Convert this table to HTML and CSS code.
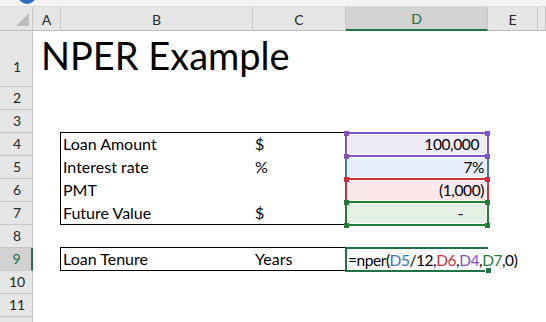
FILE: index.html
```html
<!DOCTYPE html>
<html>
<head>
<meta charset="utf-8">
<link rel="stylesheet" href="styles.css">
</head>
<body>
<div class="top"><span class="orb"></span></div>
<div class="sheet">
  <div class="corner"><span class="tri"></span></div>
  <div class="ch">A</div>
  <div class="ch">B</div>
  <div class="ch">C</div>
  <div class="ch sel">D</div>
  <div class="ch">E</div>
  <div class="ch"></div>

  <div class="rh rh-title">1</div>
  <div class="title">NPER Example</div>

  <div class="rh">2</div>
  <div class="fill"></div>

  <div class="rh">3</div>
  <div class="fill"></div>

  <div class="rh">4</div>
  <div class="cell"></div>
  <div class="cell bx bx-l bx-t">Loan Amount</div>
  <div class="cell bx bx-r bx-t">$</div>
  <div class="cell num hl hl-purple pad-acct">100,000</div>
  <div class="cell"></div>
  <div class="cell"></div>

  <div class="rh">5</div>
  <div class="cell"></div>
  <div class="cell bx bx-l">Interest rate</div>
  <div class="cell bx bx-r">%</div>
  <div class="cell num hl hl-blue pad-pct">7%</div>
  <div class="cell"></div>
  <div class="cell"></div>

  <div class="rh">6</div>
  <div class="cell"></div>
  <div class="cell bx bx-l">PMT</div>
  <div class="cell bx bx-r"></div>
  <div class="cell num hl hl-red pad-pct">(1,000)</div>
  <div class="cell"></div>
  <div class="cell"></div>

  <div class="rh">7</div>
  <div class="cell"></div>
  <div class="cell bx bx-l bx-b">Future Value</div>
  <div class="cell bx bx-r bx-b">$</div>
  <div class="cell num hl hl-green pad-dash">-</div>
  <div class="cell"></div>
  <div class="cell"></div>

  <div class="rh">8</div>
  <div class="fill"></div>

  <div class="rh sel">9</div>
  <div class="cell"></div>
  <div class="cell bx bx-l bx-t bx-b">Loan Tenure</div>
  <div class="cell bx bx-r bx-t bx-b">Years</div>
  <div class="cell active"><span class="formula">=nper(<span class="ref-blue">D5</span>/12,<span class="ref-red">D6</span>,<span class="ref-purple">D4</span>,<span class="ref-green">D7</span>,0)</span><span class="caret"></span></div>
  <div class="cell"></div>
  <div class="cell"></div>

  <div class="rh">10</div>
  <div class="fill"></div>

  <div class="rh">11</div>
  <div class="fill"></div>

  <div class="rh"></div>
  <div class="fill"></div>
</div>
</body>
</html>
```

FILE: styles.css
```css
html, body {
  margin: 0;
  padding: 0;
  background: #ffffff;
  overflow: hidden;
  width: 546px;
  height: 322px;
}

body {
  font-family: Lato, "Liberation Sans", sans-serif;
  color: #000;
}

.top {
  height: 6px;
  background: #f3f3f3;
  border-bottom: 1px solid #dcdcdc;
  display: flex;
  padding-left: 18px;
  overflow: hidden;
}

.orb {
  display: block;
  width: 18px;
  height: 18px;
  border-radius: 50%;
  background: #2f6fc2;
  margin-top: -14px;
}

.sheet {
  display: grid;
  grid-template-columns: 33px 28px 192px 93px 142px 50px 8px;
  grid-template-rows: 24px 56px repeat(11, 23px);
}

.corner {
  background: #e6e6e6;
  border-right: 1px solid #c4c4c4;
  border-bottom: 1px solid #bcbcbc;
  display: flex;
  justify-content: flex-end;
  align-items: flex-end;
  padding: 0 3px 4px 0;
}

.tri {
  width: 0;
  height: 0;
  border-left: 13px solid transparent;
  border-bottom: 13px solid #bdbdbd;
}

.ch {
  background: #e6e6e6;
  border-right: 1px solid #c6c6c6;
  border-bottom: 1px solid #bcbcbc;
  font-size: 14px;
  color: #262626;
  display: flex;
  justify-content: center;
  align-items: center;
  padding-top: 1px;
}

.ch.sel {
  background: #d2d2d2;
  border-bottom: 2px solid #217346;
  color: #1d6a44;
}

.rh {
  background: #e6e6e6;
  border-right: 1px solid #c6c6c6;
  border-bottom: 1px solid #c8c8c8;
  font-size: 14px;
  color: #262626;
  display: flex;
  justify-content: center;
  align-items: flex-end;
  padding-bottom: 3px;
  padding-left: 2px;
}

.rh-title {
  padding-bottom: 11px;
}

.rh.sel {
  background: #d2d2d2;
  border-right: 2px solid #217346;
  color: #1d6a44;
}

.fill {
  grid-column: 2 / -1;
}

.title {
  grid-column: 2 / -1;
  font-size: 38px;
  line-height: 46px;
  padding-left: 8px;
  padding-top: 1px;
  white-space: nowrap;
}

.cell {
  font-size: 16px;
  line-height: 22px;
  white-space: nowrap;
  padding-left: 2px;
  position: relative;
}

.bx {
  border-color: #000;
  border-style: solid;
  border-width: 0;
}

.bx-l { border-left-width: 1px; margin-left: -1px; }
.bx-r { border-right-width: 1px; }
.bx-t { border-top-width: 1px; margin-top: -1px; }
.bx-b { border-bottom-width: 1px; }

.num {
  text-align: right;
  font-size: 15.5px;
  letter-spacing: -0.4px;
}

.hl {
  margin: -1px -1px -1px -1px;
  border: 2px solid;
  line-height: 20px;
  box-shadow: inset 0 0 0 1px #fff;
}

.hl::before {
  content: "";
  position: absolute;
  left: -3px;
  top: -3px;
  width: 5px;
  height: 5px;
}

.hl-purple { border-color: #8152c4; background: #efebf7; z-index: 2; }
.hl-blue { border-color: #3a74c6; background: #e7eef9; z-index: 1; }
.hl-red { border-color: #cf3139; background: #fae8e8; z-index: 3; }
.hl-green { border-color: #1f7d36; background: #e3f0e3; z-index: 4; }

.hl-purple::before { background: #8152c4; box-shadow: 141px 0 #8152c4, 0 23px #8152c4, 141px 23px #8152c4; }
.hl-blue::before { background: #3a74c6; box-shadow: 141px 0 #3a74c6, 0 23px #3a74c6, 141px 23px #3a74c6; }
.hl-red::before { background: #cf3139; box-shadow: 141px 0 #cf3139, 0 23px #cf3139, 141px 23px #cf3139; }
.hl-green::before { background: #1f7d36; box-shadow: 141px 0 #1f7d36, 0 23px #1f7d36, 141px 23px #1f7d36; }

.pad-acct { padding-right: 8px; }
.pad-pct { padding-right: 3px; }
.pad-dash { padding-right: 24px; }

.active {
  margin: -1px 0 -1px -1px;
  border-top: 2px solid #217346;
  border-bottom: 2px solid #217346;
  border-left: 2px solid #217346;
  padding-left: 1px;
  line-height: 20px;
  z-index: 5;
  display: flex;
  align-items: center;
}

.formula {
  font-size: 15.5px;
  letter-spacing: -0.45px;
}

.active::after {
  content: "";
  position: absolute;
  right: -4px;
  bottom: -4px;
  width: 5px;
  height: 5px;
  background: #217346;
  border: 1px solid #fff;
}

.ref-blue { color: #3a74c6; }
.ref-red { color: #cf3139; }
.ref-purple { color: #8152c4; }
.ref-green { color: #1f7d36; }

.caret {
  display: inline-block;
  width: 1px;
  height: 18px;
  background: #000;
  margin-left: 2px;
}
```
